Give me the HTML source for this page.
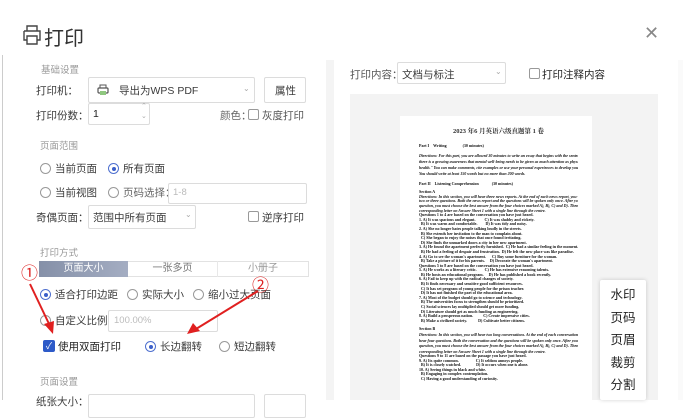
<!DOCTYPE html>
<html><head><meta charset="utf-8">
<style>
*{margin:0;padding:0;box-sizing:border-box}
body{width:683px;height:400px;overflow:hidden;background:#fff;font-family:"Liberation Sans","Noto Sans CJK SC",sans-serif;color:#333;position:relative}
.a{position:absolute;white-space:nowrap}
.t{font-size:10.5px;color:#3a3a3a}
.g{font-size:9.5px;color:#999}
.box{position:absolute;border:1px solid #dcdcdc;background:#fff;border-radius:2px}
.rad{position:absolute;width:11px;height:11px;border:1px solid #999;border-radius:50%;background:#fff}
.rad.on{border-color:#4d6fcf}
.rad.on:after{content:"";position:absolute;left:2.5px;top:2.5px;width:4px;height:4px;border-radius:50%;background:#3b5fc9}
.chk{position:absolute;width:11px;height:11px;border:1px solid #999;border-radius:2px;background:#fff}
.arr{position:absolute;font-size:8px;color:#aaa}
.pg p{font-family:"Liberation Serif",serif;font-size:4px;line-height:4.6px;font-weight:bold;font-style:italic;color:#111;white-space:nowrap;overflow:hidden}
.pg p.n{font-style:normal}
.menu div{height:22.5px;line-height:22.5px;text-align:center;font-size:12.5px;color:#222}
</style></head><body>
<div class="a" style="left:2px;top:55px;width:1px;height:345px;background:#ccc"></div>
<div class="a" style="left:678px;top:60px;width:5px;height:340px;background:#fafafa"></div>
<svg class="a" style="left:22px;top:24px" width="20" height="22" viewBox="0 0 20 22"><path d="M5 7V2h10v5M2 7h16v9h-3M5 16H2V7M5 12h10v8H5z" fill="none" stroke="#444" stroke-width="1.4"/></svg>
<div class="a" style="left:44px;top:22px;font-size:20px;color:#333">打印</div>
<div class="a" style="left:644px;top:23px;font-size:18px;color:#888;font-weight:300">✕</div>
<div class="a" style="left:326px;top:60px;width:8px;height:340px;background:#f4f4f4"></div>
<div class="a g" style="left:41px;top:62px">基础设置</div>
<div class="a t" style="left:36px;top:83px">打印机：</div>
<div class="box" style="left:88px;top:77px;width:167px;height:26px"></div>
<svg class="a" style="left:97px;top:84px" width="12" height="12" viewBox="0 0 12 12"><rect x="1" y="4" width="10" height="5" rx="1" fill="none" stroke="#555" stroke-width="1.2"/><rect x="3" y="1" width="6" height="3" fill="none" stroke="#555"/><rect x="3" y="7" width="6" height="4" fill="#8fc77f"/></svg>
<div class="a t" style="left:119px;top:83px">导出为WPS PDF</div>
<div class="arr" style="left:243px;top:84px">⌄</div>
<div class="box" style="left:264px;top:77px;width:42px;height:26px"></div>
<div class="a t" style="left:275px;top:83px">属性</div>
<div class="a t" style="left:36px;top:108px">打印份数：</div>
<div class="box" style="left:88px;top:103px;width:62px;height:22px"></div>
<div class="a t" style="left:93px;top:108px;color:#222">1</div>
<div class="arr" style="left:141px;top:102px;font-size:7px">⌃</div>
<div class="arr" style="left:141px;top:112px;font-size:7px">⌄</div>
<div class="a t" style="left:220px;top:108px;color:#666">颜色：</div>
<div class="chk" style="left:248px;top:109px"></div>
<div class="a t" style="left:262px;top:108px;color:#555">灰度打印</div>
<div class="a g" style="left:40px;top:138px">页面范围</div>
<div class="rad" style="left:40px;top:163px"></div><div class="a t" style="left:55px;top:161px">当前页面</div>
<div class="rad on" style="left:108px;top:163px"></div><div class="a t" style="left:123px;top:161px">所有页面</div>
<div class="rad" style="left:40px;top:187px"></div><div class="a t" style="left:55px;top:185px">当前视图</div>
<div class="rad" style="left:108px;top:187px"></div><div class="a t" style="left:123px;top:185px;color:#666">页码选择：</div>
<div class="box" style="left:168px;top:183px;width:139px;height:21px"></div>
<div class="a g" style="left:173px;top:187px;color:#bbb">1-8</div>
<div class="a t" style="left:36px;top:210px">奇偶页面：</div>
<div class="box" style="left:88px;top:205px;width:108px;height:24px"></div>
<div class="a t" style="left:93px;top:210px">范围中所有页面</div>
<div class="arr" style="left:185px;top:210px">⌄</div>
<div class="chk" style="left:248px;top:211px"></div>
<div class="a t" style="left:262px;top:210px">逆序打印</div>
<div class="a g" style="left:40px;top:245px">打印方式</div>
<div class="a" style="left:39px;top:261px;width:270px;height:16px;border:1px solid #e2e2e2"></div>
<div class="a" style="left:39px;top:261px;width:89px;height:16px;background:linear-gradient(90deg,#8590a8,#a4adc2);color:#fff;font-size:10px;text-align:center;line-height:16px">页面大小</div>
<div class="a" style="left:128px;top:261px;width:90px;height:16px;color:#777;font-size:10px;text-align:center;line-height:16px;border-right:1px solid #e8e8e8">一张多页</div>
<div class="a" style="left:218px;top:261px;width:90px;height:16px;color:#999;font-size:10px;text-align:center;line-height:16px">小册子</div>
<div class="rad on" style="left:40px;top:289px"></div><div class="a t" style="left:55px;top:287px">适合打印边距</div>
<div class="rad" style="left:127px;top:289px"></div><div class="a t" style="left:142px;top:287px">实际大小</div>
<div class="rad" style="left:193px;top:289px"></div><div class="a t" style="left:208px;top:287px">缩小过大页面</div>
<div class="rad" style="left:40px;top:315px"></div><div class="a t" style="left:55px;top:313px">自定义比例</div>
<div class="box" style="left:108px;top:310px;width:110px;height:22px"></div>
<div class="a g" style="left:114px;top:315px;color:#bbb">100.00%</div>
<div class="a" style="left:43px;top:340px;width:12px;height:12px;background:#2d5ac8;border-radius:2px;color:#fff;font-size:9px;line-height:12px;text-align:center">✓</div>
<div class="a t" style="left:58px;top:339px;color:#222">使用双面打印</div>
<div class="rad on" style="left:145px;top:341px"></div><div class="a t" style="left:160px;top:339px">长边翻转</div>
<div class="rad" style="left:219px;top:341px"></div><div class="a t" style="left:234px;top:339px">短边翻转</div>
<div class="a g" style="left:40px;top:374px">页面设置</div>
<div class="a t" style="left:36px;top:394px">纸张大小：</div>
<div class="box" style="left:88px;top:394px;width:167px;height:24px"></div>
<div class="box" style="left:264px;top:394px;width:42px;height:24px"></div>
<div class="a" style="left:21px;top:259px;font-size:17px;color:#d22">①</div>
<div class="a" style="left:252px;top:271px;font-size:17px;color:#d22">②</div>
<svg class="a" style="left:0;top:0" width="330" height="400"><g stroke="#e02020" stroke-width="2" fill="#e02020"><line x1="30" y1="284" x2="50" y2="326"/><polygon points="53,334 44,324 54,321" stroke="none"/><line x1="258" y1="291" x2="196" y2="329"/><polygon points="187,334 193,323 200,331" stroke="none"/></g></svg>
<div class="a t" style="left:350px;top:67px;color:#555">打印内容：</div>
<div class="box" style="left:397px;top:62px;width:109px;height:22px"></div>
<div class="a t" style="left:402px;top:67px">文档与标注</div>
<div class="arr" style="left:495px;top:67px">⌄</div>
<div class="chk" style="left:529px;top:68px"></div>
<div class="a t" style="left:542px;top:67px;color:#222">打印注释内容</div>
<div class="a" style="left:350px;top:94px;width:308px;height:306px;background:#f3f3f3"></div>
<div class="a pg" style="left:400px;top:116px;width:192px;height:284px;background:#fff;padding:9px 14px 0 19px">
<div style="text-align:center;font-family:'Liberation Serif','Noto Serif CJK SC',serif;font-size:6.5px;font-weight:bold;margin:1px 0 9px">2023 年6 月英语六级真题第 1 卷</div>
<p class="n" style="margin-bottom:4px">Part I&nbsp;&nbsp;&nbsp;&nbsp;Writing&nbsp;&nbsp;&nbsp;&nbsp;&nbsp;&nbsp;&nbsp;&nbsp;&nbsp;&nbsp;&nbsp;&nbsp;&nbsp;&nbsp;&nbsp;&nbsp;(30 minutes)</p>
<p style="line-height:6px">Directions: For this part, you are allowed 30 minutes to write an essay that begins with the sentence "Today</p>
<p style="line-height:6px">there is a growing awareness that mental well-being needs to be given as much attention as physical</p>
<p style="line-height:6px">health." You can make comments, cite examples or use your personal experiences to develop your essay.</p>
<p style="line-height:6px;margin-bottom:5px">You should write at least 150 words but no more than 200 words.</p>
<p class="n" style="margin-bottom:4px">Part II&nbsp;&nbsp;&nbsp;&nbsp;Listening Comprehension&nbsp;&nbsp;&nbsp;&nbsp;&nbsp;&nbsp;&nbsp;&nbsp;&nbsp;&nbsp;&nbsp;&nbsp;&nbsp;(30 minutes)</p>
<p class="n">Section A</p>
<p>Directions: In this section, you will hear three news reports. At the end of each news report, you will hear</p>
<p>two or three questions. Both the news report and the questions will be spoken only once. After you hear a</p>
<p>question, you must choose the best answer from the four choices marked A), B), C) and D). Then mark the</p>
<p>corresponding letter on Answer Sheet 1 with a single line through the centre.</p>
<p class="n">Questions 1 to 4 are based on the conversation you have just heard.</p>
<p class="n">1. A) It was spacious and elegant.&nbsp;&nbsp;&nbsp;&nbsp;&nbsp;&nbsp;&nbsp;&nbsp;&nbsp;C) It was shabby and rickety.</p>
<p class="n">&nbsp;&nbsp;B) It was warm and comfortable.&nbsp;&nbsp;&nbsp;&nbsp;&nbsp;&nbsp;&nbsp;&nbsp;D) It was tidy and noisy.</p>
<p class="n">2. A) She no longer hates people talking loudly in the streets.</p>
<p class="n">&nbsp;&nbsp;B) She extends her invitation to the man to complain about.</p>
<p class="n">&nbsp;&nbsp;C) She began to enjoy the noises that once found irritating.</p>
<p class="n">&nbsp;&nbsp;D) She finds the unmarked doors a city in her new apartment.</p>
<p class="n">3. A) He found the apartment perfectly furnished.&nbsp;&nbsp;C) He had a similar feeling in the moment.</p>
<p class="n">&nbsp;&nbsp;B) He had a feeling of despair and frustration.&nbsp;&nbsp;D) He felt the new place was like paradise.</p>
<p class="n">4. A) Go to see the woman's apartment.&nbsp;&nbsp;&nbsp;&nbsp;&nbsp;&nbsp;C) Buy some furniture for the woman.</p>
<p class="n">&nbsp;&nbsp;B) Take a picture of it for his parents.&nbsp;&nbsp;&nbsp;&nbsp;&nbsp;D) Decorate the woman's apartment.</p>
<p class="n">Questions 5 to 8 are based on the conversation you have just heard.</p>
<p class="n">5. A) He works as a literary critic.&nbsp;&nbsp;&nbsp;&nbsp;&nbsp;&nbsp;&nbsp;&nbsp;C) He has extensive reasoning talents.</p>
<p class="n">&nbsp;&nbsp;B) He hosts an educational program.&nbsp;&nbsp;&nbsp;&nbsp;&nbsp;D) He has published a book recently.</p>
<p class="n">6. A) Fail to keep up with the radical changes of society.</p>
<p class="n">&nbsp;&nbsp;B) It finds necessary and sensitive good sufficient resources.</p>
<p class="n">&nbsp;&nbsp;C) It has set program of young people for the prison teacher.</p>
<p class="n">&nbsp;&nbsp;D) It has not finished the part of the educational area.</p>
<p class="n">7. A) Most of the budget should go to science and technology.</p>
<p class="n">&nbsp;&nbsp;B) The universities focus to strengthen should be prioritized.</p>
<p class="n">&nbsp;&nbsp;C) Social sciences lay multiplied should get more funding.</p>
<p class="n">&nbsp;&nbsp;D) Literature should get as much funding as engineering.</p>
<p class="n">8. A) Build a prosperous nation.&nbsp;&nbsp;&nbsp;&nbsp;&nbsp;&nbsp;&nbsp;&nbsp;&nbsp;&nbsp;C) Create impressive cities.</p>
<p class="n" style="margin-bottom:4px">&nbsp;&nbsp;B) Make a civilized society.&nbsp;&nbsp;&nbsp;&nbsp;&nbsp;&nbsp;&nbsp;&nbsp;&nbsp;&nbsp;&nbsp;D) Cultivate better citizens.</p>
<p class="n">Section B</p>
<p style="line-height:5.5px">Directions: In this section, you will hear two long conversations. At the end of each conversation, you will</p>
<p style="line-height:5.5px">hear four questions. Both the conversation and the questions will be spoken only once. After you hear a</p>
<p style="line-height:5.5px">question, you must choose the best answer from the four choices marked A), B), C) and D). Then mark the</p>
<p style="line-height:5.5px">corresponding letter on Answer Sheet 1 with a single line through the centre.</p>
<p class="n">Questions 9 to 11 are based on the passage you have just heard.</p>
<p class="n">9. A) Its quite common.&nbsp;&nbsp;&nbsp;&nbsp;&nbsp;&nbsp;&nbsp;&nbsp;&nbsp;&nbsp;&nbsp;&nbsp;&nbsp;&nbsp;&nbsp;&nbsp;&nbsp;C) It seldom annoys people.</p>
<p class="n">&nbsp;&nbsp;B) It is closely watched.&nbsp;&nbsp;&nbsp;&nbsp;&nbsp;&nbsp;&nbsp;&nbsp;&nbsp;&nbsp;&nbsp;&nbsp;&nbsp;&nbsp;&nbsp;D) It occurs when one is alone.</p>
<p class="n">10. A) Seeing things in black and white.</p>
<p class="n">&nbsp;&nbsp;B) Engaging in complex contemplation.</p>
<p class="n">&nbsp;&nbsp;C) Having a good understanding of curiosity.</p>
</div>
<div class="a menu" style="left:600px;top:280px;width:46px;height:120px;background:#fff;box-shadow:0 0 4px rgba(0,0,0,.18);border-radius:2px;padding-top:4px">
<div>水印</div><div>页码</div><div>页眉</div><div>裁剪</div><div>分割</div>
</div>
</body></html>
